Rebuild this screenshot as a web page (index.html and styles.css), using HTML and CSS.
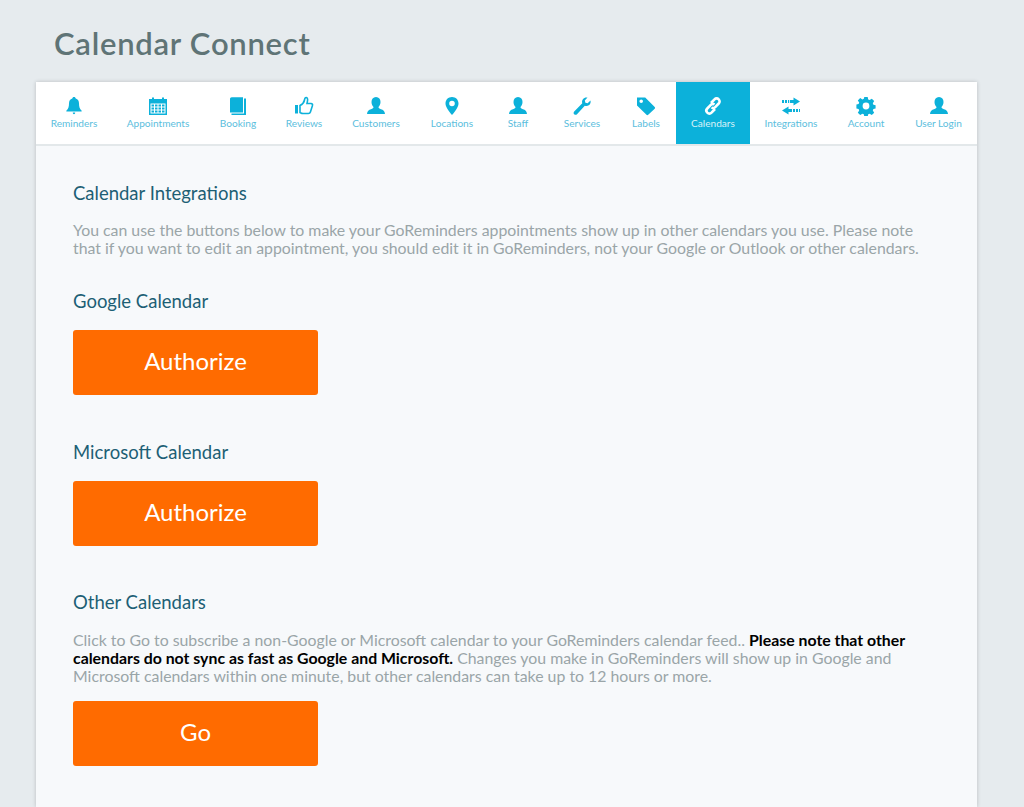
FILE: index.html
```html
<!DOCTYPE html>
<html lang="en">
<head>
    <meta charset="UTF-8">
    <title>Calendar Connect</title>
    <link rel="stylesheet" href="styles.css">
</head>
<body>

    <h1 class="page-title">Calendar Connect</h1>

    <div class="card">
        <!-- Navigation -->
        <nav class="tabs">
            <a class="tab">
                <svg viewBox="0 0 20 20"><path d="M10 1c1 0 1.600.6 1.700 1.500C14 3.200 15 5 15 7.500c0 3.400.8 5.400 2.500 6.900.5.500.2 1.100-.4 1.100H2.900c-.6 0-.9-.6-.4-1.100C4.200 12.900 5 10.900 5 7.500 5 5 6 3.200 8.300 2.500 8.400 1.600 9 1 10 1zM8.800 16.500h2.400c0 .9-.5 1.700-1.200 1.700s-1.200-.8-1.200-1.700z"/></svg>
                Reminders
            </a>
            <a class="tab">
                <svg viewBox="0 0 20 20"><path fill-rule="evenodd" d="M1 3h3V1.500h2V3h8V1.500h2V3h3v16H1zM2.500 7.500v10h15v-10z"/><path d="M3.500 8.500h2.500v2H3.500zM7 8.500h2.500v2H7zM10.500 8.500H13v2h-2.500zM14 8.500h2.500v2H14zM3.500 11.500h2.500v2H3.500zM7 11.500h2.500v2H7zM10.500 11.500H13v2h-2.500zM14 11.500h2.500v2H14zM3.500 14.500h2.500v2H3.500zM7 14.500h2.500v2H7zM10.500 14.500H13v2h-2.500zM14 14.500h2.500v2H14z"/></svg>
                Appointments
            </a>
            <a class="tab">
                <svg viewBox="0 0 20 20"><path d="M2 3c0-1 .7-1.700 1.700-1.700H15V16.500H2z"/><path d="M16 2.500h2V19H3.500v-1.500H16z"/></svg>
                Booking
            </a>
            <a class="tab">
                <svg viewBox="0 0 20 20"><path d="M1 9h3v8.500H1z"/><path fill="none" stroke="currentColor" stroke-width="1.600" d="M6 9.500c2-1 4-3 4.500-5.500.2-1.500.6-2.500 1.600-2.500 1.200 0 1.800 1.500 1.400 3.300L13 7.500h4c1.300 0 1.900 1.200 1.400 2.200l-2 6.300c-.3 1-1 1.500-2 1.500H9c-1.200 0-2-.5-3-1z"/></svg>
                Reviews
            </a>
            <a class="tab">
                <svg viewBox="0 0 20 20"><path d="M10 1c3 0 4.500 2.200 4.500 5 0 2-.8 3.800-2 5 0 1.200.8 1.700 2.500 2.300 2.200.8 3.700 1.500 4 4.700H1c.3-3.200 1.800-3.900 4-4.700 1.700-.6 2.500-1.100 2.500-2.300-1.200-1.200-2-3-2-5 0-2.800 1.500-5 4.500-5z"/></svg>
                Customers
            </a>
            <a class="tab">
                <svg viewBox="0 0 20 20"><path fill-rule="evenodd" d="M10 1c3.800 0 6.500 2.800 6.500 6.400C16.500 11 13 15.500 10 19 7 15.500 3.500 11 3.500 7.400 3.500 3.800 6.200 1 10 1zm0 3.700a2.800 2.800 0 1 0 0 5.600 2.800 2.800 0 0 0 0-5.600z"/></svg>
                Locations
            </a>
            <a class="tab">
                <svg viewBox="0 0 20 20"><path d="M10 1c3 0 4.500 2.200 4.500 5 0 2-.8 3.800-2 5 0 1.200.8 1.700 2.500 2.300 2.200.8 3.700 1.500 4 4.700H1c.3-3.200 1.800-3.900 4-4.700 1.700-.6 2.500-1.100 2.500-2.300-1.200-1.200-2-3-2-5 0-2.800 1.500-5 4.500-5z"/></svg>
                Staff
            </a>
            <a class="tab">
                <svg viewBox="0 0 20 20"><path d="M18.500 4.500c.5 2-.2 3.800-1.700 4.800-1.300.8-2.800.9-4 .4L5 18.200c-.8.800-2 .8-2.800 0s-.8-2 0-2.800L10.300 7.300c-.5-1.300-.3-2.900.6-4.100C12 1.800 13.800 1.200 15.500 1.600L12.800 4.500l.6 2.200 2.200.6z"/></svg>
                Services
            </a>
            <a class="tab">
                <svg viewBox="0 0 20 20"><path fill-rule="evenodd" d="M1 1.500h8.200L18.700 11c.5.500.5 1.200 0 1.700l-6.500 6.100c-.5.500-1.200.5-1.700 0L1 9.500zm4.200 2a1.800 1.800 0 1 0 0 3.600 1.800 1.800 0 0 0 0-3.600z"/></svg>
                Labels
            </a>
            <a class="tab active">
                <svg viewBox="0 0 20 20"><path d="M8 7l3.500-3.700c1.200-1.200 3-1.200 4.200 0s1.200 3 0 4.200l-3.500 3.600c-1 1-2.500 1.200-3.700.4"/><path d="M12 13l-3.500 3.700c-1.200 1.200-3 1.200-4.200 0s-1.200-3 0-4.200l3.500-3.600c1-1 2.500-1.200 3.700-.4"/></svg>
                Calendars
            </a>
            <a class="tab">
                <svg viewBox="0 0 20 20"><path d="M12.500 1.500L19 5.500l-6.500 4V7H9V4h3.500zM1 4h2v3H1zM4 4h2v3H4zM7 4h1.200v3H7z"/><path d="M7.500 10.500V13H11v3H7.500v2.500L1 14.500zM12 13h2v3h-2zM15 13h2v3h-2zM18 13h1v3h-1z"/></svg>
                Integrations
            </a>
            <a class="tab">
                <svg viewBox="0 0 20 20"><path fill-rule="evenodd" d="M8.300 1h3.400l.5 2.500 1.400.6 2.200-1.400 2.400 2.400-1.400 2.200.6 1.400 2.200.5v3.400l-2.200.5-.6 1.400 1.400 2.200-2.400 2.400-2.200-1.400-1.400.6-.5 2.200H8.300l-.5-2.200-1.400-.6-2.200 1.400-2.400-2.400 1.400-2.200-.6-1.400-2.200-.5V8.500l2.200-.5.6-1.400-1.400-2.200 2.400-2.400 2.200 1.400 1.400-.6zM10 6.600a3.400 3.400 0 1 0 0 6.800 3.400 3.400 0 0 0 0-6.800z"/></svg>
                Account
            </a>
            <a class="tab">
                <svg viewBox="0 0 20 20"><path d="M10 1c3 0 4.500 2.200 4.500 5 0 2-.8 3.800-2 5 0 1.200.8 1.700 2.500 2.300 2.200.8 3.700 1.500 4 4.700H1c.3-3.200 1.800-3.900 4-4.700 1.700-.6 2.500-1.100 2.500-2.300-1.200-1.200-2-3-2-5 0-2.800 1.500-5 4.500-5z"/></svg>
                User Login
            </a>
        </nav>

        <!-- Calendar sections -->
        <div class="content">
            <h2>Calendar Integrations</h2>
            <p>You can use the buttons below to make your GoReminders appointments show up in other calendars you use. Please note that if you want to edit an appointment, you should edit it in GoReminders, not your Google or Outlook or other calendars.</p>

            <h2 class="section-title">Google Calendar</h2>
            <button class="btn">Authorize</button>

            <h2 class="section-title spaced">Microsoft Calendar</h2>
            <button class="btn">Authorize</button>

            <h2 class="section-title spaced last">Other Calendars</h2>
            <p class="note">Click to Go to subscribe a non-Google or Microsoft calendar to your GoReminders calendar feed.. <b>Please note that other calendars do not sync as fast as Google and Microsoft.</b> Changes you make in GoReminders will show up in Google and Microsoft calendars within one minute, but other calendars can take up to 12 hours or more.</p>
            <button class="btn btn-go">Go</button>
        </div>
    </div>

</body>
</html>
```

FILE: styles.css
```css
/* General Reset */
html, body {
    height: 807px;
    overflow: hidden;
}
body {
    margin: 0;
    font-family: Lato, "Open Sans", sans-serif;
    background-color: #E6EBEE;
}
.page-title {
    margin: 0;
    padding: 26px 0 0 54px;
    height: 56px;
    font-size: 31px;
    line-height: 34px;
    font-weight: 600;
    letter-spacing: 0.75px;
    color: #5F7476;
}
.card {
    margin: 0 47px 0 36px;
    background-color: #F7F9FB;
    box-shadow: 0 0 4px rgba(0, 0, 0, 0.2);
    height: 725px;
}
.tabs {
    display: grid;
    grid-template-columns: 76px 92px 68px 64px 80px 72px 60px 68px 60px 74px 82px 68px 77px;
    height: 62px;
    background-color: #fff;
    border-bottom: 2px solid #E3E8EA;
}
.tab {
    display: flex;
    flex-direction: column;
    align-items: center;
    padding-top: 14px;
    font-size: 10.1px;
    line-height: 12px;
    color: #5BBEDD;
    white-space: nowrap;
}
.tab svg {
    width: 20px;
    height: 20px;
    margin-bottom: 1px;
    fill: #0CB1DA;
    color: #0CB1DA;
}
.tab.active {
    background-color: #0CB1DA;
    color: #D8F1F8;
}
.tab.active svg {
    fill: none;
    stroke: #fff;
    stroke-width: 2.6;
}
.content {
    padding: 36px 37px 0;
}
h2 {
    margin: 0;
    font-size: 18.5px;
    line-height: 22px;
    font-weight: 400;
    color: #1D5F75;
}
p {
    margin: 17px 0 0;
    max-width: 850px;
    font-size: 15.85px;
    line-height: 18px;
    color: #9AA5A8;
}
p b {
    color: #000;
}
.section-title {
    margin-top: 33px;
}
.section-title.spaced {
    margin-top: 46px;
}
.section-title.last {
    margin-top: 45px;
}
.btn {
    display: block;
    margin-top: 18px;
    padding: 0 0 5px;
    width: 245px;
    height: 65px;
    border: none;
    border-radius: 3px;
    background-color: #FF6B00;
    color: #fff;
    font-family: inherit;
    font-size: 24px;
}
.note {
    margin-top: 18px;
}
.btn-go {
    margin-top: 16px;
}
```
